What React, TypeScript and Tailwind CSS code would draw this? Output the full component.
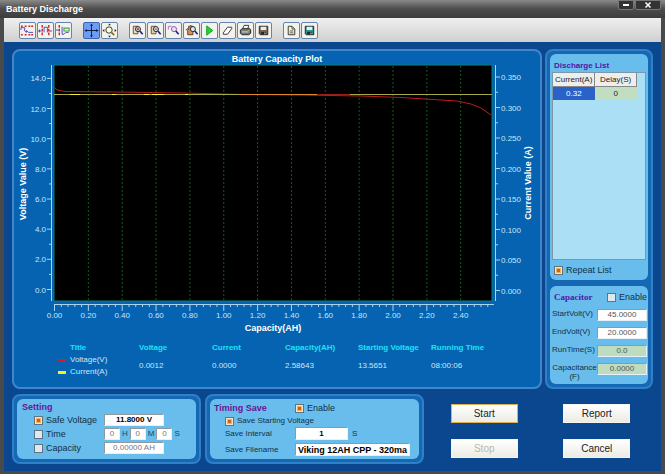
import React from 'react'

const frame = 'rounded-lg border-2 border-[#2f80c6] bg-[#1468b4] p-[3px]'
const card = 'min-w-0 rounded-md bg-[#69bdec]'

const Panel = ({ className = '', children }: { className?: string; children: React.ReactNode }) => {
  return (
    <section className={`flex min-w-0 ${frame} ${className}`}>
      <div className={`flex-1 ${card}`}>{children}</div>
    </section>
  )
}

const Check = ({ label, checked = false, small = false }: { label: string; checked?: boolean; small?: boolean }) => {
  return (
    <label className={`flex items-center gap-[3px] leading-3 whitespace-nowrap ${small ? 'text-[8px]' : 'text-[9px]'}`}>
      <input
        type="checkbox"
        defaultChecked={checked}
        className="size-[9px] shrink-0 appearance-none border border-[#5c7486] bg-[#dfe8ec] checked:bg-[#c4661c] checked:shadow-[inset_0_0_0_1px_#f6e4c4,inset_0_0_0_2px_#f0b060]"
      />
      {label}
    </label>
  )
}

const field = 'min-w-0 border border-[#e4f1f8] border-t-[#8d9aa2] border-l-[#8d9aa2] bg-white text-center outline-none'

const Magnifier = ({ color = '#222', x = 0 }: { color?: string; x?: number }) => (
  <g transform={`translate(${x} 0)`}>
    <circle cx="8.500" cy="6.500" r="2.700" fill="#dceaf8" stroke={color} />
    <path d="M10.500 8.500l3 3.500" stroke="#1c248c" strokeWidth="1.800" />
  </g>
)

const Disk = ({ color }: { color: string }) => (
  <g>
    <path d="M3.500 3.500h9v9h-8l-1-1z" fill={color} stroke="#222" />
    <path d="M5 4h6v3.500H5z" fill="#e8eef0" />
    <path d="M5.500 9.500h5V12h-5z" fill="#26262a" />
    <path d="M9 10h1v2H9z" fill="#ddd" />
  </g>
)

const icons: Record<string, React.ReactNode> = {
  'Limit cursor': (
    <g>
      <path d="M1 3.500h2m9 0h2M1 12.500h2m2 0h2m2 0h2m1 0h2" stroke="#d22230" strokeWidth="1.500" />
      <path d="M5 3.500h2m2 0h2" stroke="#d22230" strokeWidth="1.500" />
      <path d="M1 7.500V5h4v3.500l2 1.500V8l2 2h5" stroke="#4646b4" />
    </g>
  ),
  'Pulse cursor': (
    <g>
      <path d="M4.500 2v3m0 1v3m0 1v3M11.500 2v3m0 1v3m0 1v3" stroke="#d22230" strokeWidth="1.500" />
      <path d="M0 8.500h3.500M6.500 10V4.500H10V10M12 8.500h3M1.500 7v3" stroke="#4646b4" />
    </g>
  ),
  'Level cursor': (
    <g>
      <path d="M3.500 2v3m0 1v3m0 1v3" stroke="#d22230" strokeWidth="1.500" />
      <path d="M0 7.500h3M6.500 4v8h2l2-2h3" stroke="#4646b4" />
      <path d="M8.500 8.500v-3H14v3z" stroke="#42a84c" strokeWidth="1.200" />
    </g>
  ),
  Crosshair: (
    <g>
      <path d="M8 1.500v13M1.500 8h13" stroke="#111b3c" />
      <path d="M8 .5L6.500 3h3zM8 15.500L6.500 13h3zM.5 8L3 6.500v3zM15.500 8L13 6.500v3z" fill="#111b3c" />
    </g>
  ),
  'Zoom all': (
    <g>
      <circle cx="7.500" cy="7.500" r="3.400" fill="#fafadc" stroke="#333" />
      <path d="M10 10l3 3" stroke="#8a6a24" strokeWidth="1.800" />
      <path d="M8 .5L6.500 2.500h3zM8 15.500L6.500 13.500h3zM.5 8l2-1.500v3zM15.500 8l-2-1.500v3z" fill="#222" />
    </g>
  ),
  'Zoom in': (
    <g>
      <path d="M3.500 3.500h5v8h-5z" fill="#ead9bc" stroke="#6a4a3a" />
      <Magnifier />
      <path d="M7 6.500h3M8.500 5v3" stroke="#b02020" />
    </g>
  ),
  'Zoom out': (
    <g>
      <path d="M3.500 3.500h5v8h-5z" fill="#f1cf9c" stroke="#6a4a3a" />
      <Magnifier />
      <path d="M7 6.500h3" stroke="#b02020" />
    </g>
  ),
  'Zoom window': (
    <g>
      <path d="M2.500 7V3.500H6" stroke="#b866c8" />
      <Magnifier color="#a044a8" />
    </g>
  ),
  Pan: (
    <g>
      <path d="M4 12.500V8.500L2.500 7l1-1 1.500 1V3.500h1.500V3H8v.5h1.500v9z" fill="#d8925c" stroke="#5c3a2a" />
      <Magnifier x={1} />
    </g>
  ),
  Run: <path d="M5 3l6.500 5L5 13z" fill="#22d436" stroke="#16a028" />,
  Erase: <path d="M3.500 10.500l4.500-6h4.500v1.500l-4.500 6H3.500z" fill="#fff" stroke="#333" strokeLinejoin="round" />,
  Print: (
    <g>
      <path d="M5 6l1.500-3.500h5L10.500 6" fill="#f4f4f4" stroke="#333" />
      <path d="M2.500 7.500l2-1.500h8l1 1.500v3.500l-2 1.500h-7l-2-1.500z" fill="#77797c" stroke="#222" />
      <path d="M4 9.500h7" stroke="#ddd" />
      <path d="M11 8h1" stroke="#e4e43c" />
    </g>
  ),
  Save: <Disk color="#77684c" />,
  Copy: (
    <g>
      <path d="M4.500 3.500h4l3 3v6h-7z" fill="#f8f6c8" stroke="#333" />
      <path d="M8.500 3.500v3h3M6 8.500h4M6 10.500h4" stroke="#555" />
    </g>
  ),
  'Save data': <Disk color="#24948c" />,
}

const toolGroups = [
  ['Limit cursor', 'Pulse cursor', 'Level cursor'],
  ['Crosshair', 'Zoom all'],
  ['Zoom in', 'Zoom out', 'Zoom window', 'Pan', 'Run', 'Erase', 'Print', 'Save'],
  ['Copy', 'Save data'],
]

const Toolbar = () => {
  return (
    <div className="flex h-6 items-center gap-[11px] bg-gradient-to-b from-[#f0f0f0] to-[#cfcfcf] px-[15px] pt-px">
      {toolGroups.map((group) => (
        <div key={group[0]} className="flex gap-px">
          {group.map((name) => (
            <button
              key={name}
              aria-label={name}
              className={`size-[17px] rounded-xs border ${name === 'Crosshair' ? 'border-[#3a66b8] bg-[#6c9cf4]' : 'border-[#6684b0] bg-[#f3f3ee]'}`}
            >
              <svg viewBox="0 0 16 16" fill="none" className="size-full">
                {icons[name]}
              </svg>
            </button>
          ))}
        </div>
      ))}
    </div>
  )
}

// plot area inside the chart drawing
const L = 40
const T = 14
const W = 438
const H = 236

const Chart = () => {
  const volts = Array.from({ length: 15 }, (_, i) => i)
  const amps = Array.from({ length: 15 }, (_, i) => i)
  const hours = Array.from({ length: 65 }, (_, i) => i)
  const vy = (v: number) => 238.5 - v * 15.08
  const ay = (i: number) => 239.5 - i * 15.25
  const hx = (i: number) => L + 0.5 + i * 6.77

  return (
    <svg viewBox="0 0 526 286" className="block w-full" fill="none" role="img" aria-label="Battery Capacity Plot">
      <rect x={L} y={T} width={W} height={H} fill="#000" stroke="#08807c" />
      {hours.filter((i) => i % 5 === 0 && i > 0).map((i) => (
        <path key={i} d={`M${hx(i)} ${T + 1}V${T + H - 1}`} stroke="#145c1c" strokeDasharray="2 2" />
      ))}
      <path d="M40 36l3 3 8 1.500 50 .5 70 1 56 1.500 60 .5 60 1 40 1.500 40 2.500 16 1 14 3 10 4 10 7" stroke="#b81c20" />
      <path d={`M${L} 43.500H226M336 43.500H${L + W}`} stroke="#a8a848" />
      <path d="M56 43.500h10M98 43.500h4M130 43.500h5M138 43.500h12M171 43.500h3" stroke="#f0f040" />
      <path d="M226 43.500h77" stroke="#e08828" />
      <path d="M303 43.500h33" stroke="#9c1c18" />

      <g stroke="#a9d4ee">
        <path d={`M37.500 ${T}V${T + H}M481.500 ${T}V${T + H}M${L} 253.500H${L + W + 2}`} />
        {volts.map((v) => (
          <path key={v} d={`M${v % 2 ? 35 : 33} ${vy(v)}H38`} />
        ))}
        {amps.map((i) => (
          <path key={i} d={`M482 ${ay(i)}H${i % 2 ? 484 : 486}`} />
        ))}
        {hours.map((i) => (
          <path key={i} d={`M${hx(i)} 253V${i % 5 ? 256 : 260}`} />
        ))}
      </g>

      <g fill="#cbe6f6" className="text-[8px]">
        {volts.filter((v) => v % 2 === 0).map((v) => (
          <text key={v} x="32" y={vy(v) + 3} textAnchor="end">{v.toFixed(1)}</text>
        ))}
        {amps.filter((i) => i % 2 === 0).map((i) => (
          <text key={i} x="487" y={ay(i) + 3}>{(i * 0.025).toFixed(3)}</text>
        ))}
        {hours.filter((i) => i % 5 === 0).map((i) => (
          <text key={i} x={hx(i)} y="267" textAnchor="middle">{(i * 0.04).toFixed(2)}</text>
        ))}
      </g>

      <g fill="#fff" textAnchor="middle" className="text-[9px] font-bold">
        <text x="263" y="11">Battery Capacity Plot</text>
        <text x="259" y="280">Capacity(AH)</text>
        <text transform="translate(12 133) rotate(-90)">Voltage Value (V)</text>
        <text transform="translate(517 132) rotate(-90)">Current Value (A)</text>
      </g>
    </svg>
  )
}

const readings = [
  ['Voltage', '0.0012'],
  ['Current', '0.0000'],
  ['Capacity(AH)', '2.58643'],
  ['Starting Voltage', '13.5651'],
  ['Running Time', '08:00:06'],
]

const Legend = () => {
  return (
    <div className="pt-[5px] pr-[36px] pl-[56px]">
      <table className="w-full table-fixed text-left text-[8px] leading-3 whitespace-nowrap text-[#cfe6f6]">
        <thead>
          <tr className="text-[#1be4f6]">
            <th className="w-[69px]">Title</th>
            {readings.map(([name]) => (
              <th key={name}>{name}</th>
            ))}
          </tr>
        </thead>
        <tbody>
          <tr>
            <td>
              <div className="-ml-3 flex items-center gap-1"><span className="h-[3px] w-2 bg-[#d01c2c]" />Voltage(V)</div>
              <div className="-ml-3 flex items-center gap-1"><span className="h-[3px] w-2 bg-[#f4f420]" />Current(A)</div>
            </td>
            {readings.map(([name, value]) => (
              <td key={name}>{value}</td>
            ))}
          </tr>
        </tbody>
      </table>
    </div>
  )
}

const DischargeList = () => {
  return (
    <section className={`flex flex-1 flex-col px-[2px] ${card}`}>
      <h2 className="pt-[5px] pl-[2px] text-[8px] leading-[13px] font-bold text-[#5414a8]">Discharge List</h2>
      <div className="flex-1 border border-[#7c98a8] bg-[#abdff5]">
        <table className="w-[84px] table-fixed border-collapse text-center text-[8px] leading-[13px] text-[#222]">
          <thead>
            <tr className="bg-[#eeeeec]">
              <th className="border-r border-b border-[#888] p-0 font-normal">Current(A)</th>
              <th className="border-r border-b border-[#888] p-0 font-normal">Delay(S)</th>
            </tr>
          </thead>
          <tbody>
            <tr>
              <td className="bg-[#2a62c8] p-0 text-white">0.32</td>
              <td className="bg-[#c2dec0] p-0">0</td>
            </tr>
          </tbody>
        </table>
      </div>
      <div className="py-1 pl-[2px]">
        <Check label="Repeat List" checked />
      </div>
    </section>
  )
}

const capacitorFields = [
  { id: 'start-volt', label: 'StartVolt(V)', value: '45.0000', on: true },
  { id: 'end-volt', label: 'EndVolt(V)', value: '20.0000', on: true },
  { id: 'run-time', label: 'RunTime(S)', value: '0.0', on: false },
  { id: 'capacitance', label: 'Capacitance (F)', value: '0.0000', on: false },
]

const Capacitor = () => {
  return (
    <section className={`pt-[5px] pr-px pl-[2px] ${card}`}>
      <div className="flex items-center justify-between pl-[2px]">
        <h2 className="font-['Liberation_Serif',serif] text-[9px] leading-3 font-bold text-[#5414a8]">Capacitor</h2>
        <Check label="Enable" />
      </div>
      <div className="flex flex-col gap-[6px] pt-[6px] pb-[9px]">
        {capacitorFields.map((f) => (
          <div key={f.id} className="flex h-3 justify-between">
            <label htmlFor={f.id} className={`w-[45px] shrink-0 text-[8px] leading-[9px] ${f.id === 'capacitance' ? 'text-center' : ''}`}>
              {f.label}
            </label>
            <input
              id={f.id}
              defaultValue={f.value}
              readOnly={!f.on}
              className={`${field} h-3 w-[51px] text-[8px] text-[#555] ${f.on ? '' : 'bg-[#bddcc0]!'}`}
            />
          </div>
        ))}
      </div>
    </section>
  )
}

const heading = 'text-[9px] leading-3 font-bold text-[#6a1496]'

const Setting = () => {
  return (
    <Panel className="flex-[179]">
      <div className="px-[5px] pt-[2px] pb-[5px]">
        <h2 className={heading}>Setting</h2>
        <div className="grid grid-cols-[70px_1fr] gap-y-[2px] pt-px pl-3 text-[8px] leading-3">
          <Check label="Safe Voltage" checked />
          <input aria-label="Safe voltage value" defaultValue="11.8000 V" className={`${field} h-3 w-[60px] font-bold text-black`} />
          <Check label="Time" />
          <div className="flex items-center gap-[2px] text-[#1c4468]">
            <input aria-label="Hours" defaultValue="0" className={`${field} h-3 w-4 text-[#777]`} />H
            <input aria-label="Minutes" defaultValue="0" className={`${field} h-3 w-4 text-[#777]`} />M
            <input aria-label="Seconds" defaultValue="0" className={`${field} h-3 w-4 text-[#777]`} />S
          </div>
          <Check label="Capacity" />
          <input aria-label="Capacity value" defaultValue="0.00000 AH" className={`${field} h-3 w-[60px] text-[#777]`} />
        </div>
      </div>
    </Panel>
  )
}

const TimingSave = () => {
  return (
    <Panel className="flex-[209]">
      <div className="pt-[3px] pb-[2px] pl-1 text-[8px] leading-3">
        <div className="flex items-center">
          <h2 className={`w-[81px] ${heading}`}>Timing Save</h2>
          <Check label="Enable" checked />
        </div>
        <div className="pt-px pl-[11px]">
          <Check label="Save Starting Voltage" checked small />
          <div className="flex items-center">
            <label htmlFor="interval" className="w-[70px]">Save Interval</label>
            <input id="interval" defaultValue="1" className={`${field} h-[13px] w-[53px] font-bold text-black`} />
            <span className="pl-1">S</span>
          </div>
          <div className="flex items-center pt-[3px]">
            <label htmlFor="filename" className="w-[70px]">Save Filename</label>
            <input id="filename" defaultValue="Viking 12AH CPP - 320ma" className={`${field} h-[13px] w-[115px] text-[9px] font-bold text-black`} />
          </div>
        </div>
      </div>
    </Panel>
  )
}

const action = 'h-[19px] w-[67px] border border-[#f4f4ee] bg-gradient-to-b from-white to-[#ecebe4] text-[10px] leading-none text-[#222]'

const App = () => {
  return (
    <main className="flex min-h-screen flex-col bg-[#484a4c] px-1 pb-1 font-['Liberation_Sans',Arial,sans-serif] text-[#123048]">
      <header className="-mx-1 flex h-[18px] justify-between bg-gradient-to-b from-[#8a8a8a] via-[#4c4c4c] to-[#3c3c3c] pr-1 pl-[6px]">
        <h1 className="text-[9px] leading-[18px] font-bold text-white">Battery Discharge</h1>
        <div className="flex h-[10px] gap-px">
          <button aria-label="Minimize" className="flex w-4 items-center justify-center rounded-b-xs border border-[#777] bg-[#333]">
            <span className="h-[2px] w-[6px] bg-white" />
          </button>
          <button aria-label="Close" className="flex w-[26px] items-center justify-center rounded-b-xs border border-[#777] bg-[#333]">
            <svg viewBox="0 0 6 6" className="size-[6px]" stroke="#fff" strokeWidth="1.500">
              <path d="M.5.5l5 5M5.500.5l-5 5" />
            </svg>
          </button>
        </div>
      </header>
      <Toolbar />
      <div className="flex flex-1 flex-col gap-[5px] bg-[#0b478e] px-2 pt-[7px] pb-[7px]">
        <div className="flex gap-[3px]">
          <section className="min-w-0 flex-[526] rounded-lg border-2 border-[#3f87ca] bg-[#0563b1] pb-[9px]">
            <Chart />
            <Legend />
          </section>
          <aside className={`flex min-w-0 flex-[98] flex-col gap-[6px] ${frame}`}>
            <DischargeList />
            <Capacitor />
          </aside>
        </div>
        <div className="flex gap-1">
          <Setting />
          <TimingSave />
          <div className="grid flex-[225] grid-cols-2 content-start justify-items-center gap-y-4 pt-[10px]">
            <button className={`${action} border-[#e0b050]!`}>Start</button>
            <button className={action}>Report</button>
            <button disabled className={`${action} text-[#b8b8b0]!`}>Stop</button>
            <button className={action}>Cancel</button>
          </div>
        </div>
      </div>
    </main>
  )
}

export default App
